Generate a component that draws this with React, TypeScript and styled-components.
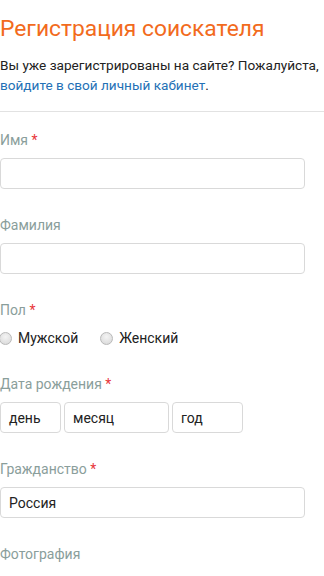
import styled, { createGlobalStyle } from 'styled-components';

const GlobalStyle = createGlobalStyle`
  html, body {
    margin: 0;
    padding: 0;
    background: #ffffff;
    font-family: Roboto, "Noto Sans", sans-serif;
  }
`;

function App() {
  return (
    <StyledPage>
      <GlobalStyle />
      <StyledHeader>
        <StyledTitle>Регистрация соискателя</StyledTitle>
        <StyledIntro>
          Вы уже зарегистрированы на сайте? Пожалуйста,{' '}
          <StyledLink href="#">войдите в свой личный кабинет</StyledLink>.
        </StyledIntro>
      </StyledHeader>
      <StyledDivider />
      <StyledForm>
        <StyledField>
          <StyledLabel>
            Имя <StyledRequired>*</StyledRequired>
          </StyledLabel>
          <StyledInput />
        </StyledField>
        <StyledField>
          <StyledLabel>Фамилия</StyledLabel>
          <StyledInput />
        </StyledField>
        <StyledField>
          <StyledLabel>
            Пол <StyledRequired>*</StyledRequired>
          </StyledLabel>
          <StyledRadioRow>
            <StyledRadioOption>
              <StyledRadio />
              Мужской
            </StyledRadioOption>
            <StyledRadioOption>
              <StyledRadio />
              Женский
            </StyledRadioOption>
          </StyledRadioRow>
        </StyledField>
        <StyledField>
          <StyledLabel>
            Дата рождения <StyledRequired>*</StyledRequired>
          </StyledLabel>
          <StyledDateRow>
            <StyledSelect $width={61}>день</StyledSelect>
            <StyledSelect $width={105}>месяц</StyledSelect>
            <StyledSelect $width={71}>год</StyledSelect>
          </StyledDateRow>
        </StyledField>
        <StyledField>
          <StyledLabel>
            Гражданство <StyledRequired>*</StyledRequired>
          </StyledLabel>
          <StyledInput defaultValue="Россия" />
        </StyledField>
        <StyledField>
          <StyledLabel>Фотография</StyledLabel>
          <StyledFileButton />
        </StyledField>
      </StyledForm>
    </StyledPage>
  );
}

export default App;

const StyledPage = styled.div`
  width: 324px;
  height: 576px;
  overflow: hidden;
`;

const StyledHeader = styled.div`
  padding: 15px 0 0 0;
`;

const StyledTitle = styled.h1`
  margin: 0;
  font-size: 22.8px;
  line-height: 28px;
  font-weight: 400;
  color: #f26b1d;
`;

const StyledIntro = styled.p`
  margin: 12px 0 0 0;
  width: 324px;
  font-size: 13.6px;
  line-height: 20px;
  color: #222;
`;

const StyledLink = styled.a`
  color: #2471b6;
  text-decoration: none;
`;

const StyledDivider = styled.hr`
  margin: 16px 0 0 0;
  border: none;
  border-top: 1px solid #e2e2e2;
  height: 0;
`;

const StyledForm = styled.form`
  display: flex;
  flex-direction: column;
  gap: 26px;
  padding-top: 18px;
`;

const StyledField = styled.div`
  display: flex;
  flex-direction: column;
  gap: 8px;
`;

const StyledLabel = styled.label`
  font-size: 14px;
  line-height: 20px;
  color: #8a9e9b;
`;

const StyledRequired = styled.span`
  color: #e8363a;
`;

const StyledInput = styled.input`
  box-sizing: border-box;
  width: 305px;
  height: 31px;
  margin: 0;
  padding: 0 8px;
  border: 1px solid #d9d9d9;
  border-radius: 4px;
  font-family: Roboto, "Noto Sans", sans-serif;
  font-size: 14px;
  color: #222;
  outline: none;
`;

const StyledRadioRow = styled.div`
  display: flex;
  gap: 22px;
  margin: 0 0 0 -1px;
`;

const StyledRadioOption = styled.label`
  display: flex;
  align-items: center;
  gap: 6px;
  font-size: 14px;
  line-height: 20px;
  color: #222;
`;

const StyledRadio = styled.span`
  box-sizing: border-box;
  width: 13px;
  height: 13px;
  border-radius: 50%;
  border: 1px solid #b9b9b9;
  background: radial-gradient(circle at 50% 35%, #f4f4f4, #d6d6d6);
`;

const StyledDateRow = styled.div`
  display: flex;
  gap: 3px;
`;

const StyledSelect = styled.div<{ $width: number }>`
  box-sizing: border-box;
  width: ${(p) => p.$width}px;
  height: 31px;
  padding: 0 8px;
  display: flex;
  align-items: center;
  border: 1px solid #d9d9d9;
  border-radius: 4px;
  font-size: 14px;
  color: #222;
`;

const StyledFileButton = styled.div`
  width: 86px;
  height: 20px;
  margin-top: 4px;
  border: 1px solid #cfcfcf;
  border-radius: 3px 3px 0 0;
  background: #f3f3f3;
`;
